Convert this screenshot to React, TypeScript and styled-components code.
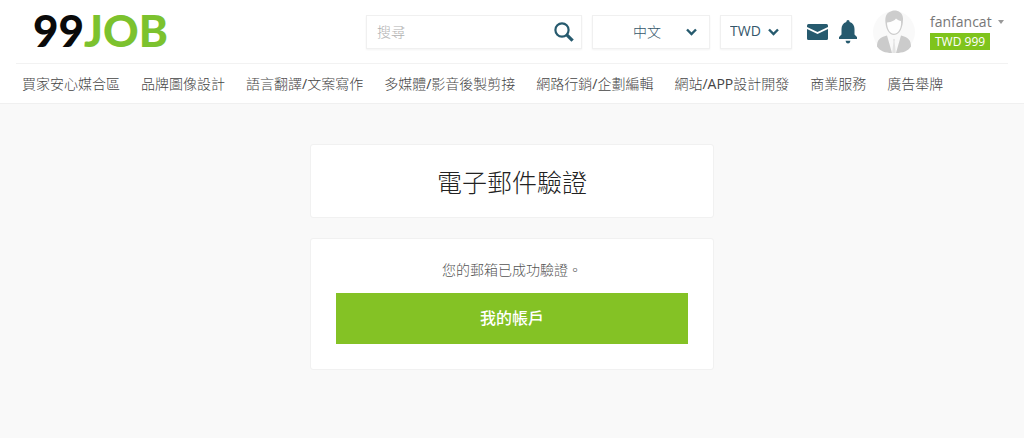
import React from "react";
import styled, { createGlobalStyle } from "styled-components";

const GlobalStyle = createGlobalStyle`
  *, *::before, *::after { box-sizing: border-box; }
  body {
    margin: 0;
    background: #f9f9f9;
    color: #555;
    font-family: "Open Sans", "Noto Sans CJK TC", sans-serif;
    font-size: 14px;
    font-weight: 300;
  }
  button, input, select { font: inherit; }
`;

const Header = styled.header`
  background: #fff;
  border-bottom: 1px solid #f0f0f0;
`;

const TopBar = styled.div`
  display: flex;
  align-items: center;
  height: 64px;
  margin: 0 16px;
  padding-left: 17px;
  border-bottom: 1px solid #f2f2f2;
`;

const Logo = styled.a`
  margin-right: auto;
  padding-bottom: 4px;
  color: #0a0a0a;
  font-family: Lato, sans-serif;
  font-size: 44px;
  font-weight: 900;
  line-height: 60px;
  text-decoration: none;
`;

const LogoAccent = styled.span`
  color: #7cc22e;
`;

const Controls = styled.div`
  display: flex;
  align-items: center;
  gap: 10px;
`;

const Field = styled.div<{ $width: number }>`
  display: flex;
  align-items: center;
  position: relative;
  width: ${(p) => p.$width}px;
  height: 34px;
  background: #fff;
  border: 1px solid #f0f0f0;
  box-shadow: 0 1px 2px rgba(0, 0, 0, 0.05);
`;

const SearchInput = styled.input`
  flex: 1;
  min-width: 0;
  padding: 0 10px;
  border: 0;
  background: none;
  outline: none;
  &::placeholder { color: #b0b0b0; opacity: 1; }
`;

const IconButton = styled.button`
  display: flex;
  padding: 0;
  border: 0;
  background: none;
  color: #265a6e;
  cursor: pointer;
`;

const SearchButton = styled(IconButton)`
  padding-right: 7px;
`;

const Select = styled.select<{ $centered?: boolean }>`
  width: 100%;
  height: 100%;
  padding: ${(p) => (p.$centered ? "0 16px 0 8px" : "0 28px 2px 9px")};
  border: 0;
  background: none;
  appearance: none;
  color: #34566a;
  font-weight: ${(p) => (p.$centered ? 300 : 400)};
  text-align-last: ${(p) => (p.$centered ? "center" : "left")};
`;

const Chevron = styled.svg`
  position: absolute;
  right: 12px;
  top: 50%;
  margin-top: -4px;
  pointer-events: none;
`;

const Alerts = styled.div`
  display: flex;
  align-items: center;
  gap: 11px;
  margin: 0 6px 0 5px;
`;

const Account = styled.div`
  display: flex;
  align-items: center;
  gap: 15px;
`;

const AccountInfo = styled.div`
  display: flex;
  flex-direction: column;
  align-items: flex-start;
  width: 78px;
  padding-bottom: 3px;
`;

const UserButton = styled.button`
  display: flex;
  align-items: center;
  gap: 6px;
  padding: 0;
  border: 0;
  background: none;
  color: #777;
  font-weight: 400;
  line-height: 22px;
  cursor: pointer;
`;

const Balance = styled.a`
  padding: 0 5px;
  background: #7fc41c;
  color: #fff;
  font-size: 12px;
  font-weight: 400;
  line-height: 17px;
  text-decoration: none;
`;

const Nav = styled.nav`
  display: flex;
  flex-wrap: wrap;
  gap: 0 21px;
  padding: 0 22px;
`;

const NavLink = styled.a`
  color: #444;
  line-height: 39px;
  text-decoration: none;
  white-space: nowrap;
`;

const Latin = styled.span`
  font-weight: 400;
`;

const Main = styled.main`
  display: flex;
  flex-direction: column;
  gap: 20px;
  width: 100%;
  max-width: 404px;
  margin: 0 auto;
  padding: 40px 0;
`;

const Card = styled.section`
  padding: 18px 25px 25px;
  background: #fff;
  border: 1px solid #f1f1f1;
  border-radius: 3px;
  text-align: center;
`;

const TitleCard = styled(Card)`
  padding: 19px 25px 17px;
`;

const Title = styled.h1`
  margin: 0;
  color: #222;
  font-size: 25px;
  font-weight: 300;
  line-height: 36px;
`;

const Message = styled.p`
  margin: 0 0 10px;
  line-height: 26px;
`;

const AccountLink = styled.a`
  display: block;
  background: #84c225;
  color: #fff;
  font-size: 16px;
  font-weight: 500;
  line-height: 51px;
  text-decoration: none;
`;

const links = [
  "買家安心媒合區",
  "品牌圖像設計",
  "語言翻譯/文案寫作",
  "多媒體/影音後製剪接",
  "網路行銷/企劃編輯",
  "網站/APP設計開發",
  "商業服務",
  "廣告舉牌",
];

const ChevronIcon = () => (
  <Chevron width="11" height="8" viewBox="0 0 11 8" aria-hidden="true">
    <path d="M1 1.5 5.5 6 10 1.5" fill="none" stroke="#265a6e" strokeWidth="2.4" />
  </Chevron>
);

const SearchIcon = () => (
  <svg width="20" height="20" viewBox="0 0 20 20" aria-hidden="true">
    <circle cx="8" cy="8" r="6.6" fill="none" stroke="currentColor" strokeWidth="2.2" />
    <path d="m12.8 12.8 5.8 5.8" stroke="currentColor" strokeWidth="3.2" />
  </svg>
);

const MailIcon = () => (
  <svg width="21" height="16" viewBox="0 0 21 16" fill="currentColor" aria-hidden="true">
    <path d="M0 1.500Q0 0 1.500 0h18Q21 0 21 1.500V3L10.500 8 0 3Z" />
    <path d="M0 5 10.500 10 21 5v9.500q0 1.500-1.500 1.500h-18Q0 16 0 14.500Z" />
  </svg>
);

const BellIcon = () => (
  <svg width="18" height="24" viewBox="0 0 18 24" fill="currentColor" aria-hidden="true">
    <path d="M9 0q1.600 0 1.700 2C14 3 15.500 5.800 15.500 9v5.500L18 17v2H0v-2l2.500-2.500V9C2.500 5.800 4 3 7.300 2 7.400.7 8 0 9 0Z" />
    <path d="M6.500 20.700h5Q11 23.500 9 23.500T6.500 20.700Z" />
  </svg>
);

const Avatar = () => (
  <svg width="42" height="44" viewBox="0 0 42 44" role="img" aria-label="fanfancat">
    <circle cx="21" cy="22" r="21" fill="#f9f9f9" />
    <path
      d="M14 25.500 19 43C12 43 7 41 4 36.500 4 30 7 27 14 25.500Zm14 0L23 43c7 0 12-2 15-6.500 0-6.500-3-9.500-10-11Z"
      fill="#cbcbcb"
    />
    <path d="m20 29.500 1-.7 1 .7-.4 2 1.200 11.500h-3.600l1.200-11.500Z" fill="#e4e4e4" />
    <path
      d="M12.500 13C11.500 5 15 2 18 1.500 21-.7 30.500.5 30 9.500c0 7-3 15.500-9 15.500-5 0-8-6-8.500-12Z"
      fill="#cdcdcd"
    />
    <path
      d="M14 12.500c5-.5 7.500-2 9-4 1.500 1.500 3.500 2.200 5 2.500.8 6.500-2.500 12.800-7 12.800S14 18 14 12.500Z"
      fill="#fefefe"
    />
  </svg>
);

export default function App() {
  return (
    <>
      <GlobalStyle />
      <Header>
        <TopBar>
          <Logo href="#">
            99<LogoAccent>JOB</LogoAccent>
          </Logo>
          <Controls>
            <Field $width={216}>
              <SearchInput type="search" placeholder="搜尋" aria-label="搜尋" />
              <SearchButton type="button" aria-label="搜尋">
                <SearchIcon />
              </SearchButton>
            </Field>
            <Field $width={118}>
              <Select $centered aria-label="語言" defaultValue="zh">
                <option value="zh">中文</option>
              </Select>
              <ChevronIcon />
            </Field>
            <Field $width={72}>
              <Select aria-label="貨幣" defaultValue="TWD">
                <option value="TWD">TWD</option>
              </Select>
              <ChevronIcon />
            </Field>
            <Alerts>
              <IconButton type="button" aria-label="訊息">
                <MailIcon />
              </IconButton>
              <IconButton type="button" aria-label="通知">
                <BellIcon />
              </IconButton>
            </Alerts>
            <Account>
              <Avatar />
              <AccountInfo>
                <UserButton type="button">
                  fanfancat
                  <svg width="6" height="4" viewBox="0 0 6 4" aria-hidden="true">
                    <path d="M0 0h6L3 4Z" fill="#999" />
                  </svg>
                </UserButton>
                <Balance href="#">TWD 999</Balance>
              </AccountInfo>
            </Account>
          </Controls>
        </TopBar>
        <Nav>
          {links.map((label) => (
            <NavLink href="#" key={label}>
              {label
                .split(/([/A-Z]+)/)
                .map((part, i) => (i % 2 ? <Latin key={i}>{part}</Latin> : part))}
            </NavLink>
          ))}
        </Nav>
      </Header>
      <Main>
        <TitleCard>
          <Title>電子郵件驗證</Title>
        </TitleCard>
        <Card>
          <Message>您的郵箱已成功驗證。</Message>
          <AccountLink href="#">我的帳戶</AccountLink>
        </Card>
      </Main>
    </>
  );
}
